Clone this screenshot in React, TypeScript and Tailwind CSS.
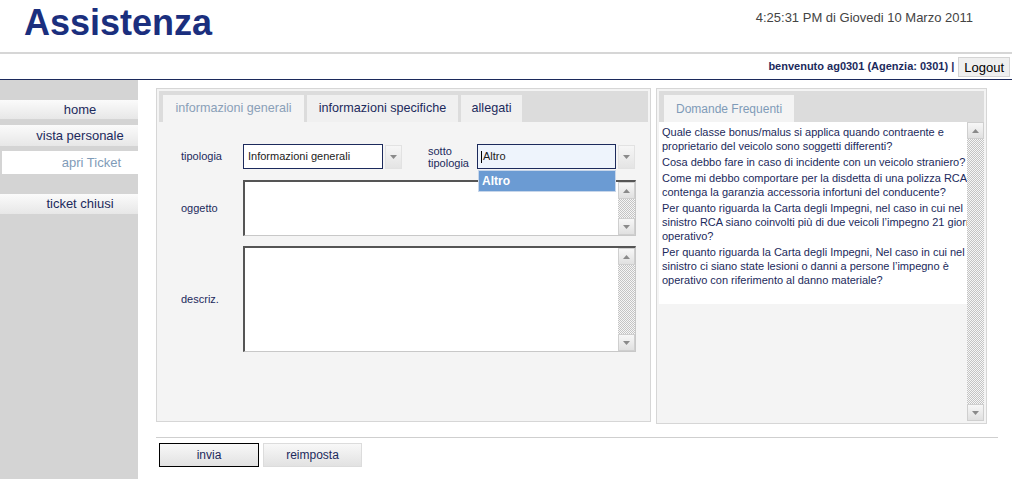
import React from 'react';

const NAVY = 'text-[#1c2a5c]';

const Tri: React.FC<{ up?: boolean }> = ({ up }) => (
  <svg width="7" height="4" viewBox="0 0 7 4">
    <polygon points={up ? '0,4 7,4 3.5,0' : '0,0 7,0 3.5,4'} fill="#8a8a8a" />
  </svg>
);

const ArrowBox: React.FC<{ up?: boolean }> = ({ up }) => (
  <div className="w-[17px] h-[17px] shrink-0 flex items-center justify-center border border-[#cfcfcf] bg-gradient-to-b from-[#f7f7f7] to-[#e0e0e0]">
    <Tri up={up} />
  </div>
);

const Scrollbar: React.FC = () => (
  <div className="w-[17px] flex flex-col shrink-0">
    <ArrowBox up />
    <div className="flex-1 bg-[repeating-conic-gradient(#c4c4c4_0%_25%,#f6f6f6_0%_50%)] bg-[length:2px_2px]" />
    <ArrowBox />
  </div>
);

const SelectArrow: React.FC = () => (
  <div className="w-[17px] h-[24px] ml-[2px] flex items-center justify-center border border-[#e2e2e2] bg-gradient-to-b from-[#f6f6f6] to-[#e4e4e4]">
    <Tri />
  </div>
);

const TextBox: React.FC<{ h: string }> = ({ h }) => (
  <div className={`flex w-[393px] ${h} bg-white border-t-2 border-l-2 border-t-[#555] border-l-[#555] border-b border-r border-b-[#c8c8c8] border-r-[#c8c8c8]`}>
    <div className="flex-1" />
    <Scrollbar />
  </div>
);

const SideItem: React.FC<{ label: string; cls: string }> = ({ label, cls }) => (
  <div className={`flex items-center text-[13px] ${NAVY} bg-gradient-to-b from-[#fbfbfb] to-[#e7e7e7] ${cls}`}>
    <span className="w-full text-center pl-[22px]">{label}</span>
  </div>
);

const faqs = [
  ['Quale classe bonus/malus si applica quando contraente e', 'proprietario del veicolo sono soggetti differenti?'],
  ['Cosa debbo fare in caso di incidente con un veicolo straniero?'],
  ['Come mi debbo comportare per la disdetta di una polizza RCA che', 'contenga la garanzia accessoria infortuni del conducente?'],
  [
    'Per quanto riguarda la Carta degli Impegni, nel caso in cui nel',
    'sinistro RCA siano coinvolti più di due veicoli l’impegno 21 giorni è',
    'operativo?',
  ],
  [
    'Per quanto riguarda la Carta degli Impegni, Nel caso in cui nel',
    'sinistro ci siano state lesioni o danni a persone l’impegno è',
    'operativo con riferimento al danno materiale?',
  ],
];

const App: React.FC = () => {
  return (
    <div className="w-[1012px] h-[480px] overflow-hidden bg-white font-['Liberation_Sans',Arial,sans-serif]">
      {/* header */}
      <div className="h-[52px] flex justify-between">
        <h1 className="pl-[24px] pt-[5px] text-[36px] leading-none font-bold text-[#1b2f7e]">Assistenza</h1>
        <div className="pr-[39px] pt-[8px] text-[13px] text-[#444]">4:25:31 PM di Giovedi 10 Marzo 2011</div>
      </div>
      <div className="h-[2px] bg-[#d6d6d6]" />
      <div className="h-[26px] flex items-center justify-end pr-[2px] border-b border-[#1c2a5c]">
        <span className={`text-[11px] font-bold ${NAVY} mr-[4px]`}>benvenuto ag0301 (Agenzia: 0301) |</span>
        <button className="h-[20px] px-[5px] text-[13px] text-black bg-[#efefef] border border-[#d4d4d4]">Logout</button>
      </div>

      <div className="flex h-[399px]">
        {/* sidebar */}
        <div className="w-[138px] bg-[#d4d4d4] pt-[20px] shrink-0">
          <SideItem label="home" cls="h-[19px]" />
          <SideItem label="vista personale" cls="h-[21px] mt-[6px]" />
          <div className="h-[23px] mt-[5px] ml-[2px] bg-white flex items-center justify-end pr-[17px] text-[13px] text-[#7f9bb8]">
            apri Ticket
          </div>
          <SideItem label="ticket chiusi" cls="h-[20px] mt-[20px]" />
        </div>

        {/* content */}
        <div className="ml-[18px] w-[842px] pt-[8px]">
          <div className="flex gap-[5px]">
            {/* form panel */}
            <div className="w-[495px] h-[334px] border border-[#d6d6d6] bg-[#f4f4f4] p-[2px] flex flex-col">
              <div className="h-[31px] bg-[#dcdcdc] flex items-end gap-[3px] pl-[4px] text-[12.6px]">
                <div className="w-[141px] h-[27px] flex items-center justify-center bg-[#f4f4f4] text-[#8aa0b8]">informazioni generali</div>
                <div className={`w-[151px] h-[27px] flex items-center justify-center bg-[#f0f0f0] ${NAVY}`}>informazioni specifiche</div>
                <div className={`w-[61px] h-[27px] flex items-center justify-center bg-[#f0f0f0] ${NAVY}`}>allegati</div>
              </div>

              <div className="relative flex flex-col pt-[22px] text-[11px] text-[#222]">
                <div className="flex items-center h-[25px]">
                  <span className={`w-[84px] pl-[22px] ${NAVY}`}>tipologia</span>
                  <div className="w-[140px] h-[25px] border border-[#1c2a5c] bg-white flex items-center pl-[4px]">
                    Informazioni generali
                  </div>
                  <SelectArrow />
                  <span className={`w-[75px] pl-[26px] leading-[12px] ${NAVY} whitespace-nowrap`}>
                    sotto
                    <br />
                    tipologia
                  </span>
                  <div className="w-[139px] h-[25px] border border-[#1c2a5c] bg-[#eef4fc] flex items-center pl-[3px]">
                    <span className="w-px h-[12px] bg-black mr-px" />
                    Altro
                  </div>
                  <SelectArrow />
                </div>

                <div className="flex items-center mt-[11px]">
                  <span className={`w-[84px] pl-[22px] ${NAVY}`}>oggetto</span>
                  <TextBox h="h-[56px]" />
                </div>
                <div className="flex items-center mt-[10px]">
                  <span className={`w-[84px] pl-[22px] ${NAVY}`}>descriz.</span>
                  <TextBox h="h-[106px]" />
                </div>

                {/* open dropdown list */}
                <div className="absolute left-[319px] top-[48px] w-[138px] h-[22px] bg-[#6b9bd3] border border-[#c7d6ea] flex items-center pl-[3px] text-[12px] font-bold text-white">
                  Altro
                </div>
              </div>
            </div>

            {/* FAQ panel */}
            <div className="w-[331px] h-[336px] border border-[#d6d6d6] bg-[#f4f4f4] p-[2px] flex flex-col">
              <div className="h-[31px] bg-[#dcdcdc] flex items-end pl-[5px] text-[12px]">
                <div className="h-[27px] px-[12px] flex items-center bg-[#f4f4f4] text-[#7f9bb8]">Domande Frequenti</div>
              </div>
              <div className="flex flex-1">
                <div className="flex-1 overflow-hidden">
                  <div className="bg-white pl-[3px] pt-[3px] pb-[17px] text-[11px] leading-[14px] text-[#1c2a5c] whitespace-nowrap flex flex-col gap-[2px]">
                    {faqs.map((q, i) => (
                      <div key={i}>
                        {q.map((l, j) => (
                          <div key={j}>{l}</div>
                        ))}
                      </div>
                    ))}
                  </div>
                </div>
                <Scrollbar />
              </div>
            </div>
          </div>

          <div className="mt-[13px] h-px bg-[#cfcfcf]" />
          <div className="flex gap-[4px] mt-[5px] ml-[3px]">
            <button className={`w-[100px] h-[24px] border border-black bg-gradient-to-b from-[#f8f8f8] to-[#e2e2e2] text-[12px] ${NAVY}`}>
              invia
            </button>
            <button className={`w-[99px] h-[24px] border border-[#dcdcdc] bg-gradient-to-b from-[#f8f8f8] to-[#e2e2e2] text-[12px] ${NAVY}`}>
              reimposta
            </button>
          </div>
        </div>
      </div>
    </div>
  );
};

export default App;
